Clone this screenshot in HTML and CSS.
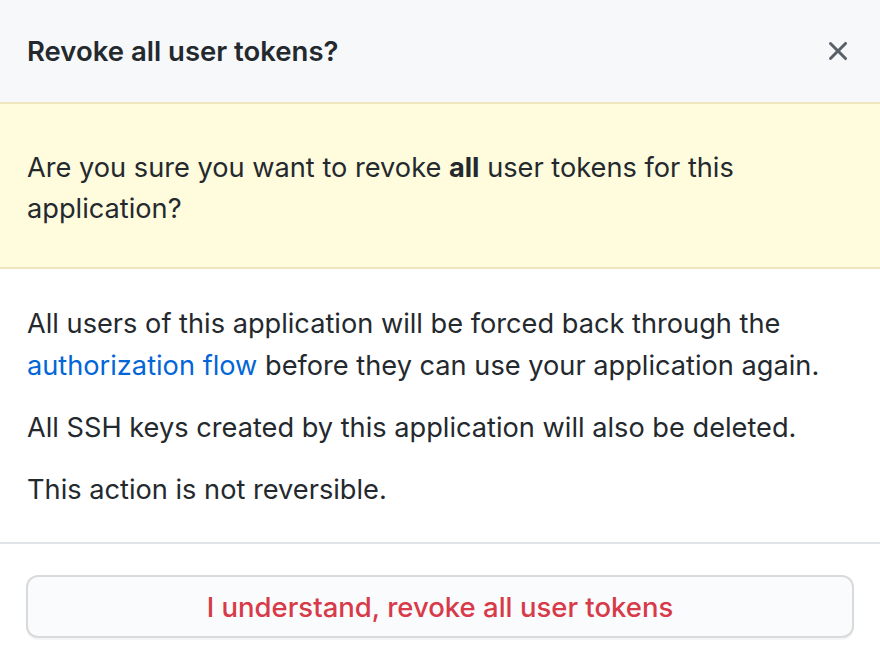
FILE: index.html
```html
<!DOCTYPE html>
<html lang="en">
<head>
<meta charset="utf-8">
<title>Revoke all user tokens?</title>
<link rel="stylesheet" href="styles.css">
</head>
<body>
<div class="dialog">
  <div class="dialog-header">
    <h1 class="dialog-title">Revoke all user tokens?</h1>
    <button class="close-btn" aria-label="Close">
      <svg viewBox="0 0 16 16" width="32" height="32" aria-hidden="true"><path fill="currentColor" d="M3.72 3.72a.75.75 0 011.06 0L8 6.94l3.22-3.22a.75.75 0 111.06 1.06L9.06 8l3.22 3.22a.75.75 0 11-1.06 1.06L8 9.06l-3.22 3.22a.75.75 0 01-1.06-1.06L6.94 8 3.72 4.780a.75.75 0 010-1.06z"/></svg>
    </button>
  </div>
  <div class="flash-warn">
    <span>Are you sure you want to revoke <strong>all</strong> user tokens for this application?</span>
  </div>
  <div class="dialog-body">
    <p>All users of this application will be forced back through the <a href="#">authorization flow</a> before they can use your application again.</p>
    <p>All SSH keys created by this application will also be deleted.</p>
    <p>This action is not reversible.</p>
  </div>
  <div class="dialog-footer">
    <button class="btn-danger">I understand, revoke all user tokens</button>
  </div>
</div>
</body>
</html>
```

FILE: styles.css
```css
* { box-sizing: border-box; }
html, body {
  margin: 0;
  padding: 0;
  background: #ffffff;
}
body {
  font-family: Inter, "Liberation Sans", Arial, sans-serif;
  color: #24292e;
  font-size: 27.2px;
  line-height: 42px;
}
.dialog {
  width: 880px;
}
.dialog-header {
  background: #f6f8fa;
  height: 102px;
  padding: 0 26px 0 27px;
  display: flex;
  align-items: center;
  justify-content: space-between;
}
.dialog-title {
  margin: 0;
  font-size: 27.5px;
  font-weight: 600;
  line-height: 40px;
  color: #24292e;
}
.close-btn {
  border: 0;
  background: transparent;
  padding: 0;
  color: #586069;
  width: 32px;
  height: 32px;
  display: flex;
}
.flash-warn {
  background: #fffbdd;
  border-top: 2px solid #f0e6bd;
  border-bottom: 2px solid #f0e6bd;
  padding: 43px 27px 38px;
  line-height: 41px;
}
.flash-warn strong { font-weight: 700; }
.dialog-body {
  padding: 34px 27px 31px;
  border-bottom: 2px solid #e1e4e8;
}
.dialog-body p {
  margin: 0 0 20px;
}
.dialog-body p:last-child { margin-bottom: 0; }
.dialog-body a {
  color: #0366d6;
  text-decoration: none;
}
.dialog-footer {
  padding: 31px 26px 16px;
}
.btn-danger {
  display: block;
  width: 100%;
  height: 63px;
  border: 2px solid #d9dadc;
  border-radius: 12px;
  background: #fafbfc;
  color: #d73a49;
  font-family: inherit;
  font-size: 27.5px;
  font-weight: 500;
  box-shadow: 0 2px 0 rgba(27,31,35,0.04);
}
```
